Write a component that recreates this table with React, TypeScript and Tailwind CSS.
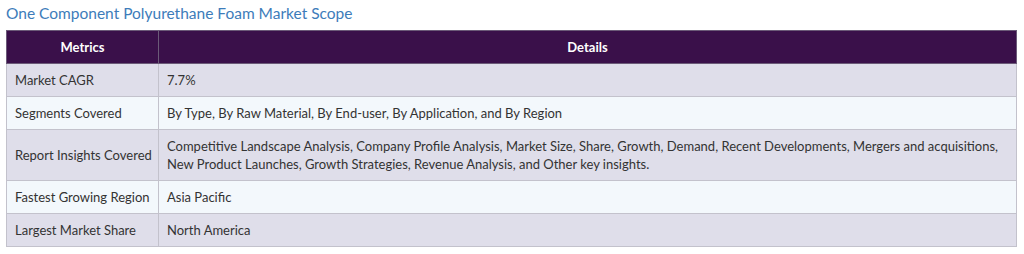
import React from 'react';

const rows = [
    { metric: 'Market CAGR', details: '7.7%' },
    { metric: 'Segments Covered', details: 'By Type, By Raw Material, By End-user, By Application, and By Region' },
    {
        metric: 'Report Insights Covered',
        details:
            'Competitive Landscape Analysis, Company Profile Analysis, Market Size, Share, Growth, Demand, Recent Developments, Mergers and acquisitions, New Product Launches, Growth Strategies, Revenue Analysis, and Other key insights.',
    },
    { metric: 'Fastest Growing Region', details: 'Asia Pacific' },
    { metric: 'Largest Market Share', details: 'North America' },
];

export default function App() {
    return (
        <div className="w-[1024px] h-[254px] bg-white font-['Lato',sans-serif] text-[#333333]">
            <h2 className="pl-[6px] pt-[3px] h-[30px] text-[15.5px] leading-[20px] text-[#3d7cba]">
                One Component Polyurethane Foam Market Scope
            </h2>
            <table className="ml-[6px] w-[1011px] border-collapse text-[13px] leading-[18px]">
                <thead>
                    <tr className="h-[33px] bg-[#3a104a] text-white">
                        <th className="w-[152px] border border-[#6b5a78] font-bold">Metrics</th>
                        <th className="border border-[#6b5a78] font-bold">Details</th>
                    </tr>
                </thead>
                <tbody>
                    {rows.map((r, i) => (
                        <tr
                            key={r.metric}
                            className={`${r.metric === 'Report Insights Covered' ? 'h-[51px]' : 'h-[33px]'} ${i % 2 === 0 ? 'bg-[#dfdeea]' : 'bg-[#f3f8fc]'}`}
                        >
                            <td className="border border-[#c3c2cc] pl-[8px] align-middle">{r.metric}</td>
                            <td className="border border-[#c3c2cc] pl-[8px] pr-[14px] align-middle">{r.details}</td>
                        </tr>
                    ))}
                </tbody>
            </table>
        </div>
    );
}
